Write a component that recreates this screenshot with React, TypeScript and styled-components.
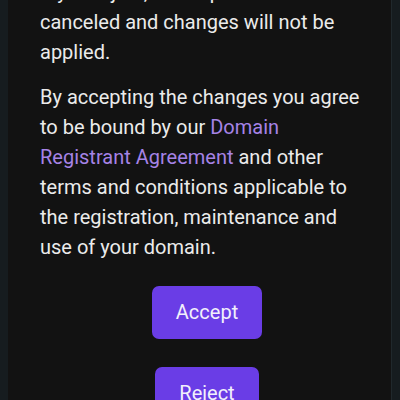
import styled, { createGlobalStyle } from 'styled-components'

const GlobalStyle = createGlobalStyle`
	html, body {
		margin: 0;
		padding: 0;
		background: #161c1f;
	}
	body {
		overflow: hidden;
	}
`

const Page = styled.div`
	width: 400px;
	height: 400px;
	overflow: hidden;
	background: #161c1f;
	padding: 0 8px;
	box-sizing: border-box;
`

const Card = styled.div`
	margin-top: -23px;
	background: #121212;
	border-right: 1px solid #20282c;
	padding: 0 27px 40px 32px;
	font-family: Roboto, 'Noto Sans', sans-serif;
	color: #ebebeb;
`

const Paragraph = styled.p`
	margin: 0 0 15px;
	font-size: 20px;
	line-height: 30px;
`

const Link = styled.a`
	color: #a683e6;
	text-decoration: none;
`

const Actions = styled.div`
	display: flex;
	flex-direction: column;
	align-items: center;
	gap: 28px;
	margin-top: 24px;
	margin-right: -10px;
`

const Button = styled.button`
	background: #6a3de6;
	color: #f2f0fb;
	border: none;
	border-radius: 7px;
	padding: 14px 24px;
	font-family: Roboto, 'Noto Sans', sans-serif;
	font-size: 20px;
	line-height: 25px;
	cursor: pointer;
`

export default function App() {
	return (
		<>
			<GlobalStyle />
			<Page>
				<Card>
					<Paragraph>
						If you reject, the request will be canceled and changes will not be
						applied.
					</Paragraph>
					<Paragraph>
						By accepting the changes you agree to be bound by our{' '}
						<Link href="#">Domain Registrant Agreement</Link> and other terms
						and conditions applicable to the registration, maintenance and use
						of your domain.
					</Paragraph>
					<Actions>
						<Button type="button">Accept</Button>
						<Button type="button">Reject</Button>
					</Actions>
				</Card>
			</Page>
		</>
	)
}
